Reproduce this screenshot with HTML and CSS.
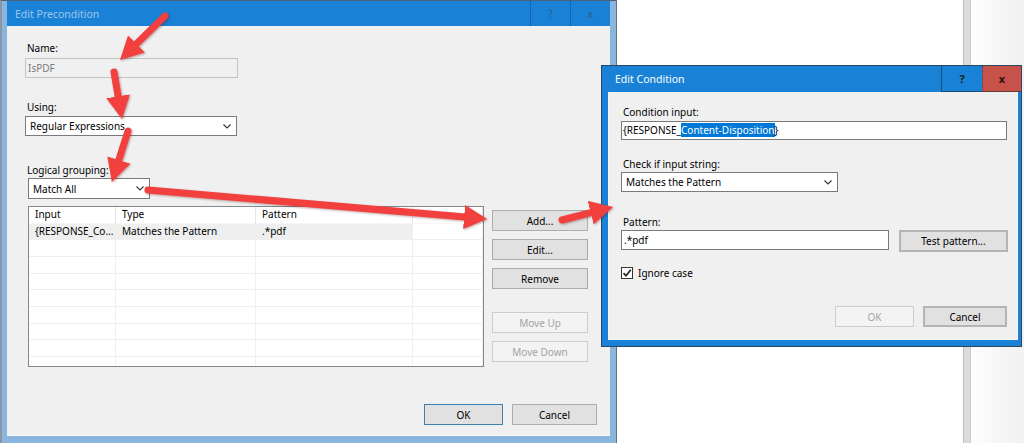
FILE: index.html
```html
<!DOCTYPE html>
<html>
<head>
<meta charset="utf-8">
<link rel="stylesheet" href="styles.css">
</head>
<body>
<div class="desktop">
  <div class="win-prec">
    <div class="tbar inactive">
      <span class="title">Edit Precondition</span>
      <span class="tbtn">?</span>
      <span class="tbtn">x</span>
    </div>
    <div class="pbody">
      <div class="lbl">Name:</div>
      <div class="field disabled name-field">IsPDF</div>
      <div class="lbl using-lbl">Using:</div>
      <div class="combo using-combo"><span>Regular Expressions</span><svg class="chev" width="8" height="5" viewBox="0 0 8 5"><path d="M0.5 0.5 L4 4 L7.5 0.5" fill="none" stroke="#333" stroke-width="1.1"/></svg></div>
      <div class="lbl group-lbl">Logical grouping:</div>
      <div class="combo group-combo"><span>Match All</span><svg class="chev" width="8" height="5" viewBox="0 0 8 5"><path d="M0.5 0.5 L4 4 L7.5 0.5" fill="none" stroke="#333" stroke-width="1.1"/></svg></div>
      <div class="list-row">
        <div class="grid">
          <div class="cell hd">Input</div><div class="cell hd">Type</div><div class="cell hd">Pattern</div><div class="cell hd"></div>
          <div class="cell sel-row">{RESPONSE_Co...</div><div class="cell sel-row">Matches the Pattern</div><div class="cell sel-row">.*pdf</div><div class="cell"></div>
          <div class="cell"></div><div class="cell"></div><div class="cell"></div><div class="cell"></div>
          <div class="cell"></div><div class="cell"></div><div class="cell"></div><div class="cell"></div>
          <div class="cell"></div><div class="cell"></div><div class="cell"></div><div class="cell"></div>
          <div class="cell"></div><div class="cell"></div><div class="cell"></div><div class="cell"></div>
          <div class="cell"></div><div class="cell"></div><div class="cell"></div><div class="cell"></div>
          <div class="cell"></div><div class="cell"></div><div class="cell"></div><div class="cell"></div>
          <div class="cell"></div><div class="cell"></div><div class="cell"></div><div class="cell"></div>
          <div class="cell"></div><div class="cell"></div><div class="cell"></div><div class="cell"></div>
        </div>
        <div class="side-btns">
          <div class="btn">Add...</div>
          <div class="btn">Edit...</div>
          <div class="btn">Remove</div>
          <div class="btn disabled move-up">Move Up</div>
          <div class="btn disabled">Move Down</div>
        </div>
      </div>
      <div class="footer prec-footer">
        <div class="btn default ok">OK</div>
        <div class="btn cancel">Cancel</div>
      </div>
    </div>
  </div>
  <div class="pane-white"></div>
  <div class="scroll"></div>
  <div class="pane-right"></div>

  <div class="win-cond">
    <div class="tbar active">
      <span class="title">Edit Condition</span>
      <span class="tbtn help">?</span>
      <span class="tbtn close">x</span>
    </div>
    <div class="cbody">
      <div class="lbl">Condition input:</div>
      <div class="field cond-input">{RESPONSE_<span class="hl">Content-Disposition</span>}</div>
      <div class="lbl check-lbl">Check if input string:</div>
      <div class="combo check-combo"><span>Matches the Pattern</span><svg class="chev" width="8" height="5" viewBox="0 0 8 5"><path d="M0.5 0.5 L4 4 L7.5 0.5" fill="none" stroke="#333" stroke-width="1.1"/></svg></div>
      <div class="lbl pattern-lbl">Pattern:</div>
      <div class="pattern-row">
        <div class="field pattern-input">.*pdf</div>
        <div class="btn test-btn">Test pattern...</div>
      </div>
      <div class="check-row">
        <span class="checkbox"><svg width="10" height="10" viewBox="0 0 10 10"><path d="M1.5 5.2 L4 7.8 L8.8 1.8" fill="none" stroke="#222" stroke-width="1.7"/></svg></span>
        <span>Ignore case</span>
      </div>
      <div class="footer cond-footer">
        <div class="btn disabled ok2">OK</div>
        <div class="btn cancel">Cancel</div>
      </div>
    </div>
  </div>

  <svg class="arrows" width="1024" height="443" viewBox="0 0 1024 443">
    <defs>
      <marker id="head" markerUnits="userSpaceOnUse" markerWidth="23" markerHeight="24" viewBox="0 0 23 24" refX="1" refY="12" orient="auto">
        <path d="M0 0 L23 12 L0 24 Z" fill="#f2403e"/>
      </marker>
    </defs>
    <g stroke="#f2403e" stroke-width="7" stroke-linecap="round" marker-end="url(#head)">
      <line x1="165" y1="16" x2="135.7" y2="44.6"/>
      <line x1="114" y1="72" x2="118.3" y2="97.3"/>
      <line x1="128" y1="131" x2="118.5" y2="161"/>
      <line x1="148" y1="190" x2="465.1" y2="217.1"/>
      <line x1="562" y1="220" x2="591.7" y2="212.4"/>
    </g>
  </svg>
</div>
</body>
</html>
```
FILE: styles.css
```css
* { box-sizing: border-box; }
html, body { margin: 0; padding: 0; }
body {
  width: 1024px;
  height: 443px;
  overflow: hidden;
  background: #fff;
  font-family: "Noto Sans", "Open Sans", sans-serif;
  font-size: 10px;
  color: #000;
}
.desktop {
  position: relative;
  width: 1024px;
  height: 443px;
  display: flex;
  overflow: hidden;
}

/* ---------- window chrome ---------- */
.tbar {
  flex: none;
  display: flex;
  align-items: stretch;
  height: 25px;
  background: #1a82d6;
}
.tbar .title {
  flex: 1;
  display: flex;
  align-items: center;
  font-size: 10.5px;
}
.tbtn {
  flex: none;
  display: flex;
  align-items: center;
  justify-content: center;
  width: 40px;
  font-size: 11px;
}
.tbar.inactive .title { padding-left: 8px; color: #9fc5ec; }
.tbar.inactive .tbtn { border-left: 1px solid #1665ab; color: #2a5a8c; }

.win-prec {
  flex: none;
  width: 617px;
  height: 443px;
  display: flex;
  flex-direction: column;
  background: #8ab5dc;
  border-left: 2px solid #8a96a3;
  border-right: 1px solid #5f7386;
  border-top: 1px solid #4d6277;
  padding: 0 6px 7px 5px;
}
.pbody {
  flex: 1;
  display: flex;
  flex-direction: column;
  align-items: flex-start;
  background: #f0f0f0;
  padding: 15px 13px 0 18px;
  border-bottom: 1px solid #f9f9f9;
}

.pane-white { flex: none; width: 346px; background: #fff; }
.scroll {
  flex: none;
  width: 8px;
  background: #dcdcdc;
  border-left: 1px solid #bcbcbc;
  border-right: 1px solid #c9c9c9;
}
.pane-right { flex: 1; background: linear-gradient(to right, #fdfdfd, #f1f1f1); }

/* ---------- controls ---------- */
.lbl {
  height: 14px;
  line-height: 14px;
  padding-left: 2px;
  white-space: nowrap;
}
.field {
  height: 20px;
  line-height: 18px;
  border: 1px solid #7a7a7a;
  background: #fff;
  padding-left: 2px;
  white-space: nowrap;
}
.field.disabled {
  background: #f0f0f0;
  border-color: #c3c3c3;
  color: #7a7a7a;
}
.combo {
  height: 20px;
  display: flex;
  align-items: center;
  justify-content: space-between;
  border: 1px solid #7a7a7a;
  background: #fff;
  padding: 0 5px 0 4px;
  white-space: nowrap;
}
.chev { flex: none; }
.btn {
  height: 21px;
  display: flex;
  align-items: center;
  justify-content: center;
  background: #e1e1e1;
  border: 1px solid #adadad;
  white-space: nowrap;
}
.btn.default { border-color: #3c7fb1; }
.btn.disabled {
  background: #f3f3f3;
  border-color: #cccccc;
  color: #a3a3a3;
}

/* left dialog positions */
.name-field { margin-top: 3px; width: 213px; }
.using-lbl { margin-top: 22px; }
.using-combo { margin-top: 2px; width: 212px; }
.group-lbl { margin-top: 27px; }
.group-combo { margin-top: 1px; margin-left: 3px; width: 122px; height: 21px; }

.list-row {
  margin-top: 7px;
  margin-left: 3px;
  display: flex;
  gap: 8px;
  align-items: flex-start;
}
.grid {
  width: 456px;
  height: 161px;
  overflow: hidden;
  border: 1px solid #828790;
  background: #fff;
  display: grid;
  grid-template-columns: 87px 140px 157px 70px;
  grid-auto-rows: 16.67px;
}
.cell {
  border-right: 1px solid #efefef;
  border-bottom: 1px solid #efefef;
  padding-left: 6px;
  line-height: 15px;
  white-space: nowrap;
  overflow: hidden;
}
.cell.hd { border-right-color: #e4e4e4; border-bottom-color: #f7f7f7; }
.cell.sel-row { background: #efefef; }
.side-btns {
  display: flex;
  flex-direction: column;
  gap: 8px;
  width: 96px;
  padding-top: 4px;
}
.side-btns .btn { width: 96px; }
.side-btns .move-up { margin-top: 15px; }

.footer { display: flex; gap: 9px; align-self: flex-end; }
.prec-footer { margin-top: 37px; }
.prec-footer .ok { width: 79px; }
.prec-footer .cancel { width: 85px; }

/* ---------- condition dialog ---------- */
.win-cond {
  position: absolute;
  left: 601px;
  top: 65px;
  width: 421px;
  height: 282px;
  display: flex;
  flex-direction: column;
  background: #1a82d6;
  border: 1px solid #2a4866;
}
.tbar.active { height: 26px; }
.tbar.active .title { padding-left: 13px; color: #fff; }
.tbar.active .tbtn { font-weight: bold; color: #1b1b1b; font-size: 11px; }
.tbar.active .help {
  width: 41px;
  border-left: 1px solid #1d4a78;
  border-bottom: 1px solid #1d4a78;
}
.tbar.active .close {
  width: 39px;
  background: #c6524a;
  border-left: 1px dotted #3a3a5a;
  border-bottom: 1px solid #6a3a3a;
  color: #2a1111;
}
.cbody {
  flex: 1;
  margin: 0 3px 6px 6px;
  background: #f0f0f0;
  padding: 13px 10px 0 12px;
  display: flex;
  flex-direction: column;
  align-items: flex-start;
  border: 1px solid #f6f6f6;
  border-top: none;
}
.cond-input { margin-top: 2px; width: 386px; height: 19px; line-height: 17px; padding-left: 1px; }
.hl { background: #0078d7; color: #fff; }
.check-lbl { margin-top: 17px; }
.check-combo { margin-top: 1px; width: 217px; }
.pattern-lbl { margin-top: 23px; }
.pattern-row { margin-top: 1px; display: flex; gap: 10px; align-items: flex-start; }
.pattern-input { width: 268px; }
.test-btn { width: 109px; height: 22px; border-width: 2px; border-color: #b4b4b4; }
.check-row {
  margin-top: 14px;
  display: flex;
  align-items: center;
  gap: 5px;
  height: 14px;
}
.checkbox {
  width: 12px;
  height: 12px;
  border: 1px solid #333;
  background: #fff;
  display: flex;
  align-items: center;
  justify-content: center;
}
.cond-footer { margin-top: 26px; }
.cond-footer .ok2 { width: 79px; }
.cond-footer .cancel { width: 84px; border-width: 2px; border-color: #b4b4b4; }

/* ---------- annotation arrows ---------- */
.arrows {
  position: absolute;
  left: 0;
  top: 0;
  pointer-events: none;
  filter: drop-shadow(1px 1px 1px rgba(80, 0, 0, 0.35));
}
```
